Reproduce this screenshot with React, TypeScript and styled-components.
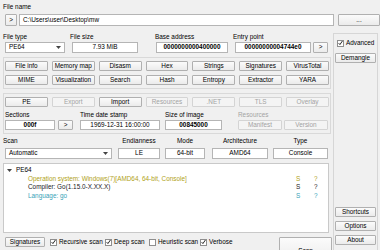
import React from "react";
import styled, { createGlobalStyle } from "styled-components";

const Global = createGlobalStyle`
  html, body { margin: 0; padding: 0; background: #f0f0f0; }
  body { width: 380px; height: 250px; overflow: hidden; }
  * { box-sizing: border-box; }
`;

const Window = styled.div`
  width: 380px;
  height: 250px;
  overflow: hidden;
  background: #f0f0f0;
  font-family: "Liberation Sans", Arial, sans-serif;
  font-size: 6.4px;
  line-height: 1;
  color: #000;
  display: flex;
  flex-direction: column;
`;

const Caption = styled.div<{ $shift?: number; $disabled?: boolean }>`
  height: 8px;
  line-height: 8px;
  white-space: nowrap;
  margin-left: ${(p) => p.$shift ?? 0}px;
  color: ${(p) => (p.$disabled ? "#a3a3a3" : "#000")};
`;

const TopCaption = styled(Caption)`
  margin: 3px 0 0 3px;
`;

const FileRow = styled.div`
  display: flex;
  align-items: center;
  height: 12px;
  margin-top: 3px;
  padding-left: 5px;
`;

const Btn = styled.div<{ $w?: number; $h?: number; $ml?: number; $mt?: number; $off?: boolean }>`
  flex: none;
  width: ${(p) => (p.$w ? `${p.$w}px` : "auto")};
  height: ${(p) => p.$h ?? 10}px;
  margin-left: ${(p) => p.$ml ?? 0}px;
  margin-top: ${(p) => p.$mt ?? 0}px;
  border: 1px solid ${(p) => (p.$off ? "#d4d4d4" : "#b0b0b0")};
  border-radius: 1px;
  background: ${(p) => (p.$off ? "#f4f4f4" : "linear-gradient(#fbfbfb, #ebebeb)")};
  color: ${(p) => (p.$off ? "#a3a3a3" : "#000")};
  display: flex;
  align-items: center;
  justify-content: center;
  white-space: nowrap;
`;

const Field = styled.div<{ $h?: number; $bold?: boolean }>`
  height: ${(p) => p.$h ?? 11}px;
  background: #fff;
  border: 1px solid #b5b5b5;
  display: flex;
  align-items: center;
  justify-content: center;
  padding: 0 3px;
  white-space: nowrap;
  overflow: hidden;
  font-weight: ${(p) => (p.$bold ? 700 : 400)};
`;

const PathField = styled(Field)`
  flex: 1;
  height: 12px;
  margin-left: 2px;
  justify-content: flex-start;
`;

const Combo = styled(Field)`
  justify-content: space-between;
`;

const Body = styled.div`
  display: flex;
  margin-top: 7px;
  flex: none;
`;

const Main = styled.div`
  width: 328px;
  margin-left: 3px;
  display: flex;
  flex-direction: column;
`;

const Side = styled.div`
  width: 45px;
  height: 222px;
  margin-left: 2px;
  border: 1px solid #d6d6d6;
  padding: 3px 1px 9px 1px;
  display: flex;
  flex-direction: column;
`;

const SideBottom = styled.div`
  margin-top: auto;
  display: flex;
  flex-direction: column;
  gap: 4px;
`;

const Row = styled.div<{ $mt?: number; $pl?: number }>`
  display: flex;
  align-items: flex-end;
  margin-top: ${(p) => p.$mt ?? 0}px;
  padding-left: ${(p) => p.$pl ?? 0}px;
`;

const Group = styled.div<{ $w: number; $ml?: number; $center?: boolean; $gap?: number }>`
  flex: none;
  width: ${(p) => p.$w}px;
  margin-left: ${(p) => p.$ml ?? 0}px;
  display: flex;
  flex-direction: column;
  gap: ${(p) => p.$gap ?? 1}px;
  align-items: ${(p) => (p.$center ? "center" : "stretch")};
  & > ${Field} { align-self: stretch; }
`;

const Frame = styled.div<{ $mt: number }>`
  margin-top: ${(p) => p.$mt}px;
  border: 1px solid #d9d9d9;
  padding: 3px 1px 3px 1px;
`;

const ToolGrid = styled.div`
  display: grid;
  grid-template-columns: repeat(7, 1fr);
  grid-auto-rows: 10px;
  gap: 4px 4px;
`;

const PairRow = styled.div`
  display: flex;
  gap: 2px;
`;

const Results = styled.div`
  margin-top: 4px;
  height: 70px;
  width: 326px;
  background: #fff;
  border: 1px solid #c9c9c9;
  padding: 2px 0 0 3px;
  display: flex;
  flex-direction: column;
`;

const TreeRow = styled.div<{ $color?: string; $indent?: number }>`
  display: grid;
  grid-template-columns: 1fr 18px 14px;
  height: 8.5px;
  align-items: center;
  color: ${(p) => p.$color ?? "#000"};
  padding-left: ${(p) => p.$indent ?? 0}px;
`;

const TreeHead = styled.div`
  display: flex;
  align-items: center;
  gap: 4px;
`;

const BottomRow = styled.div`
  display: flex;
  align-items: flex-start;
  margin-top: 4px;
  padding-left: 2px;
`;

const CheckItem = styled.div<{ $w?: number; $ml?: number }>`
  flex: none;
  width: ${(p) => (p.$w ? `${p.$w}px` : "auto")};
  margin-left: ${(p) => p.$ml ?? 0}px;
  height: 10px;
  display: flex;
  align-items: center;
  gap: 2px;
  white-space: nowrap;
`;

const Box = styled.div`
  width: 7px;
  height: 7px;
  background: #fff;
  border: 1px solid #8e8e8e;
  display: flex;
  align-items: center;
  justify-content: center;
`;

const SideCheck = styled(CheckItem)`
  margin: 1px 0 0 2px;
`;

const ScanBtn = styled(Btn)`
  margin-left: auto;
  margin-right: -1px;
  align-items: flex-start;
  padding-top: 10px;
`;

const Arrow = () => (
  <svg width="5" height="3" viewBox="0 0 5 3">
    <path d="M0 0 L5 0 L2.5 3 Z" fill="#444" />
  </svg>
);

const Tick = () => (
  <svg width="6" height="6" viewBox="0 0 6 6">
    <path d="M0.8 3.2 L2.3 4.9 L5.3 0.6" fill="none" stroke="#111" strokeWidth="1.1" />
  </svg>
);

const Check = ({ label, on, w, ml }: { label: string; on?: boolean; w?: number; ml?: number }) => (
  <CheckItem $w={w} $ml={ml}>
    <Box>{on && <Tick />}</Box>
    <span>{label}</span>
  </CheckItem>
);

const tools = [
  "File info", "Memory map", "Disasm", "Hex", "Strings", "Signatures", "VirusTotal",
  "MIME", "Visualization", "Search", "Hash", "Entropy", "Extractor", "YARA",
];

const peButtons: [string, boolean][] = [
  ["PE", false], ["Export", true], ["Import", false], ["Resources", true],
  [".NET", true], ["TLS", true], ["Overlay", true],
];

const results = [
  { text: "Operation system: Windows(7)[AMD64, 64-bit, Console]", color: "#b0a217" },
  { text: "Compiler: Go(1.15.0-X.XX.X)", color: "#1a1a1a" },
  { text: "Language: go", color: "#38a3b8" },
];

export default function App() {
  return (
    <Window>
      <Global />
      <TopCaption>File name</TopCaption>
      <FileRow>
        <Btn $w={12} $h={12}>&gt;</Btn>
        <PathField>C:\Users\user\Desktop\mw</PathField>
        <Btn $w={42} $h={12} $ml={4}>...</Btn>
      </FileRow>
      <Body>
        <Main>
          <Row $pl={2}>
            <Group $w={60}>
              <Caption $shift={-2}>File type</Caption>
              <Combo>
                <span>PE64</span>
                <Arrow />
              </Combo>
            </Group>
            <Group $w={66} $ml={7}>
              <Caption $shift={-2}>File size</Caption>
              <Field>7.93 MiB</Field>
            </Group>
            <Group $w={72} $ml={18}>
              <Caption $shift={-1}>Base address</Caption>
              <Field $bold>0000000000400000</Field>
            </Group>
            <Group $w={76} $ml={7}>
              <Caption $shift={-2}>Entry point</Caption>
              <Field $bold>00000000004744e0</Field>
            </Group>
            <Btn $w={15} $h={11} $ml={2}>&gt;</Btn>
          </Row>

          <Frame $mt={4}>
            <ToolGrid>
              {tools.map((t) => (
                <Btn key={t}>{t}</Btn>
              ))}
            </ToolGrid>
          </Frame>

          <Frame $mt={4}>
            <ToolGrid>
              {peButtons.map(([t, off]) => (
                <Btn key={t} $off={off}>{t}</Btn>
              ))}
            </ToolGrid>
            <Row $mt={4}>
              <Group $w={50}>
                <Caption>Sections</Caption>
                <Field $h={10} $bold>000f</Field>
              </Group>
              <Btn $w={15} $ml={3}>&gt;</Btn>
              <Group $w={80} $ml={7}>
                <Caption>Time date stamp</Caption>
                <Field $h={10}>1969-12-31 16:00:00</Field>
              </Group>
              <Group $w={57} $ml={5}>
                <Caption>Size of image</Caption>
                <Field $h={10} $bold>00845000</Field>
              </Group>
              <Group $w={90} $ml={16}>
                <Caption $disabled>Resources</Caption>
                <PairRow>
                  <Btn $w={44} $off>Manifest</Btn>
                  <Btn $w={44} $off>Version</Btn>
                </PairRow>
              </Group>
            </Row>
          </Frame>

          <Row $mt={3} $pl={2}>
            <Group $w={107} $gap={3}>
              <Caption $shift={-2}>Scan</Caption>
              <Combo>
                <span>Automatic</span>
                <Arrow />
              </Combo>
            </Group>
            <Group $w={42} $ml={6} $gap={3} $center>
              <Caption>Endianness</Caption>
              <Field>LE</Field>
            </Group>
            <Group $w={40} $ml={5} $gap={3} $center>
              <Caption>Mode</Caption>
              <Field>64-bit</Field>
            </Group>
            <Group $w={56} $ml={7} $gap={3} $center>
              <Caption>Architecture</Caption>
              <Field>AMD64</Field>
            </Group>
            <Group $w={55} $ml={5} $gap={3} $center>
              <Caption>Type</Caption>
              <Field>Console</Field>
            </Group>
          </Row>

          <Results>
            <TreeRow>
              <TreeHead>
                <Arrow />
                <span>PE64</span>
              </TreeHead>
            </TreeRow>
            {results.map((r) => (
              <TreeRow key={r.text} $color={r.color} $indent={21}>
                <span>{r.text}</span>
                <span>S</span>
                <span>?</span>
              </TreeRow>
            ))}
          </Results>

          <BottomRow>
            <Btn $w={40}>Signatures</Btn>
            <Check label="Recursive scan" on w={55} ml={5} />
            <Check label="Deep scan" on w={44} />
            <Check label="Heuristic scan" w={51} />
            <Check label="Verbose" on />
            <ScanBtn $w={53} $h={26}>Scan</ScanBtn>
          </BottomRow>
        </Main>

        <Side>
          <SideCheck>
            <Box><Tick /></Box>
            <span>Advanced</span>
          </SideCheck>
          <Btn $h={10} $mt={5}>Demangle</Btn>
          <SideBottom>
            <Btn $h={10}>Shortcuts</Btn>
            <Btn $h={10}>Options</Btn>
            <Btn $h={10}>About</Btn>
          </SideBottom>
        </Side>
      </Body>
    </Window>
  );
}
